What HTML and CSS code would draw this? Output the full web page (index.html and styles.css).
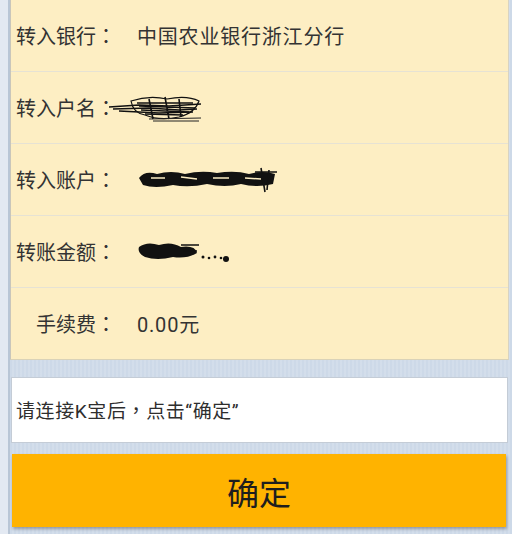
FILE: index.html
```html
<!DOCTYPE html>
<html lang="zh-CN">
<head>
    <meta charset="UTF-8">
    <meta name="viewport" content="width=device-width, initial-scale=1.0">
    <title>转账确认</title>
    <link rel="stylesheet" href="styles.css">
</head>
<body>

<div class="page">
    <div class="info-panel">
        <div class="info-row">
            <span class="info-label">转入银行<span class="punct" lang="zh-TW">：</span></span>
            <span class="info-value">中国农业银行浙江分行</span>
        </div>
        <div class="info-row">
            <span class="info-label">转入户名<span class="punct" lang="zh-TW">：</span></span>
            <span class="info-value masked masked-name">
                <svg width="96" height="30" viewBox="0 0 96 30">
                    <path d="M0 14 L30 12 L60 13 L92 11 M4 16 L40 15 L70 17 L88 16 M10 18 L50 20 L84 19" stroke="#111" stroke-width="1.4" fill="none"/>
                    <path d="M22 8 Q40 2 58 6 Q78 2 90 8 Q86 20 70 24 Q50 28 36 22 Q24 20 22 8 Z" fill="none" stroke="#111" stroke-width="1.2"/>
                    <path d="M28 10 L84 10 M30 13 L86 15 M32 17 L80 19 M36 21 L74 22 M40 6 L44 26 M56 4 L60 26 M70 6 L72 24" stroke="#111" stroke-width="1.6" fill="none"/>
                    <path d="M40 26 L92 25 M44 28 L90 28" stroke="#222" stroke-width="1" fill="none"/>
                </svg>
            </span>
        </div>
        <div class="info-row">
            <span class="info-label">转入账户<span class="punct" lang="zh-TW">：</span></span>
            <span class="info-value masked">
                <svg width="142" height="28" viewBox="0 0 142 28">
                    <path d="M2 12 Q8 4 20 8 Q34 4 48 8 Q64 4 80 7 Q98 4 112 8 Q126 4 138 8 L136 18 Q120 22 104 18 Q88 22 70 18 Q52 22 36 19 Q18 23 6 19 Z" fill="#111"/>
                    <path d="M14 12 L28 12 M44 11 L60 13 M76 12 L92 12 M108 12 L124 13" stroke="#fdeec3" stroke-width="1.4"/>
                    <path d="M124 2 L128 26 M132 4 L130 24 M118 6 L140 6" stroke="#111" stroke-width="1.6" fill="none"/>
                </svg>
            </span>
        </div>
        <div class="info-row">
            <span class="info-label">转账金额<span class="punct" lang="zh-TW">：</span></span>
            <span class="info-value masked">
                <svg width="94" height="26" viewBox="0 0 94 26">
                    <path d="M2 8 Q10 2 22 6 Q34 2 44 8 Q58 6 60 14 Q50 20 36 18 Q20 22 8 18 Q0 14 2 8 Z" fill="#111"/>
                    <path d="M44 6 L62 6 M46 12 L60 12" stroke="#111" stroke-width="1.4"/>
                    <circle cx="66" cy="18" r="1.5" fill="#111"/>
                    <circle cx="72" cy="19" r="1.3" fill="#111"/>
                    <circle cx="78" cy="18" r="1.4" fill="#111"/>
                    <circle cx="84" cy="19" r="1.3" fill="#111"/>
                    <circle cx="89" cy="20" r="3" fill="#111"/>
                </svg>
            </span>
        </div>
        <div class="info-row">
            <span class="info-label">手续费<span class="punct" lang="zh-TW">：</span></span>
            <span class="info-value">0.00元</span>
        </div>
    </div>

    <div class="tip-box">请连接K宝后<span class="punct" lang="zh-TW">，</span>点击“确定”</div>

    <button class="confirm-btn">确定</button>
</div>

</body>
</html>
```

FILE: styles.css
```css
/* Base */
body {
    margin: 0;
    height: 534px;
    overflow: hidden;
    font-family: Roboto, "Noto Sans CJK SC", sans-serif;
    color: #333;
    background-color: #cdd9e8;
    background-image:
        linear-gradient(to right, #e3e9f2 0, #e3e9f2 8px, #b9c6d6 8px, #b9c6d6 10px, transparent 10px),
        repeating-linear-gradient(to right, rgba(255, 255, 255, 0.12) 0, rgba(255, 255, 255, 0.12) 2px, transparent 2px, transparent 4px);
}

.page {
    padding: 0 3px 0 10px;
}

/* centred full-width punctuation, like the device font */
.punct {
    font-family: "Noto Sans CJK TC", sans-serif;
}

/* Info panel */
.info-panel {
    background-color: #fdeec3;
    border-left: 1px solid #c9c6ba;
    border-right: 1px solid #d8d3c2;
    border-bottom: 1px solid #d9d2b8;
}

.info-row {
    display: grid;
    grid-template-columns: 101px 1fr;
    column-gap: 21px;
    align-items: center;
    height: 71px;
    padding-left: 4px;
    border-bottom: 1px solid #e6e2d4;
    font-size: 20px;
}

.info-row:last-child {
    border-bottom: none;
}

.info-label {
    text-align: right;
    white-space: nowrap;
}

.info-value {
    white-space: nowrap;
    letter-spacing: 0.8px;
}

.masked {
    display: flex;
    align-items: center;
    height: 30px;
}

.masked-name {
    margin-left: -28px;
}

/* Tip box */
.tip-box {
    margin: 17px 1px 0 1px;
    height: 64px;
    line-height: 64px;
    padding-left: 4px;
    background-color: #fff;
    border: 1px solid #c4ccd6;
    font-size: 19px;
    letter-spacing: 0.6px;
    color: #2e2e2e;
}

/* Confirm button */
.confirm-btn {
    display: block;
    width: 494px;
    height: 73px;
    margin: 11px 0 0 2px;
    background-color: #ffb300;
    border: none;
    border-radius: 0;
    box-shadow: 1px 2px 3px rgba(0, 0, 0, 0.3);
    font-family: "Noto Sans CJK SC", sans-serif;
    font-size: 32px;
    color: #1e1e1e;
    cursor: pointer;
}
```
